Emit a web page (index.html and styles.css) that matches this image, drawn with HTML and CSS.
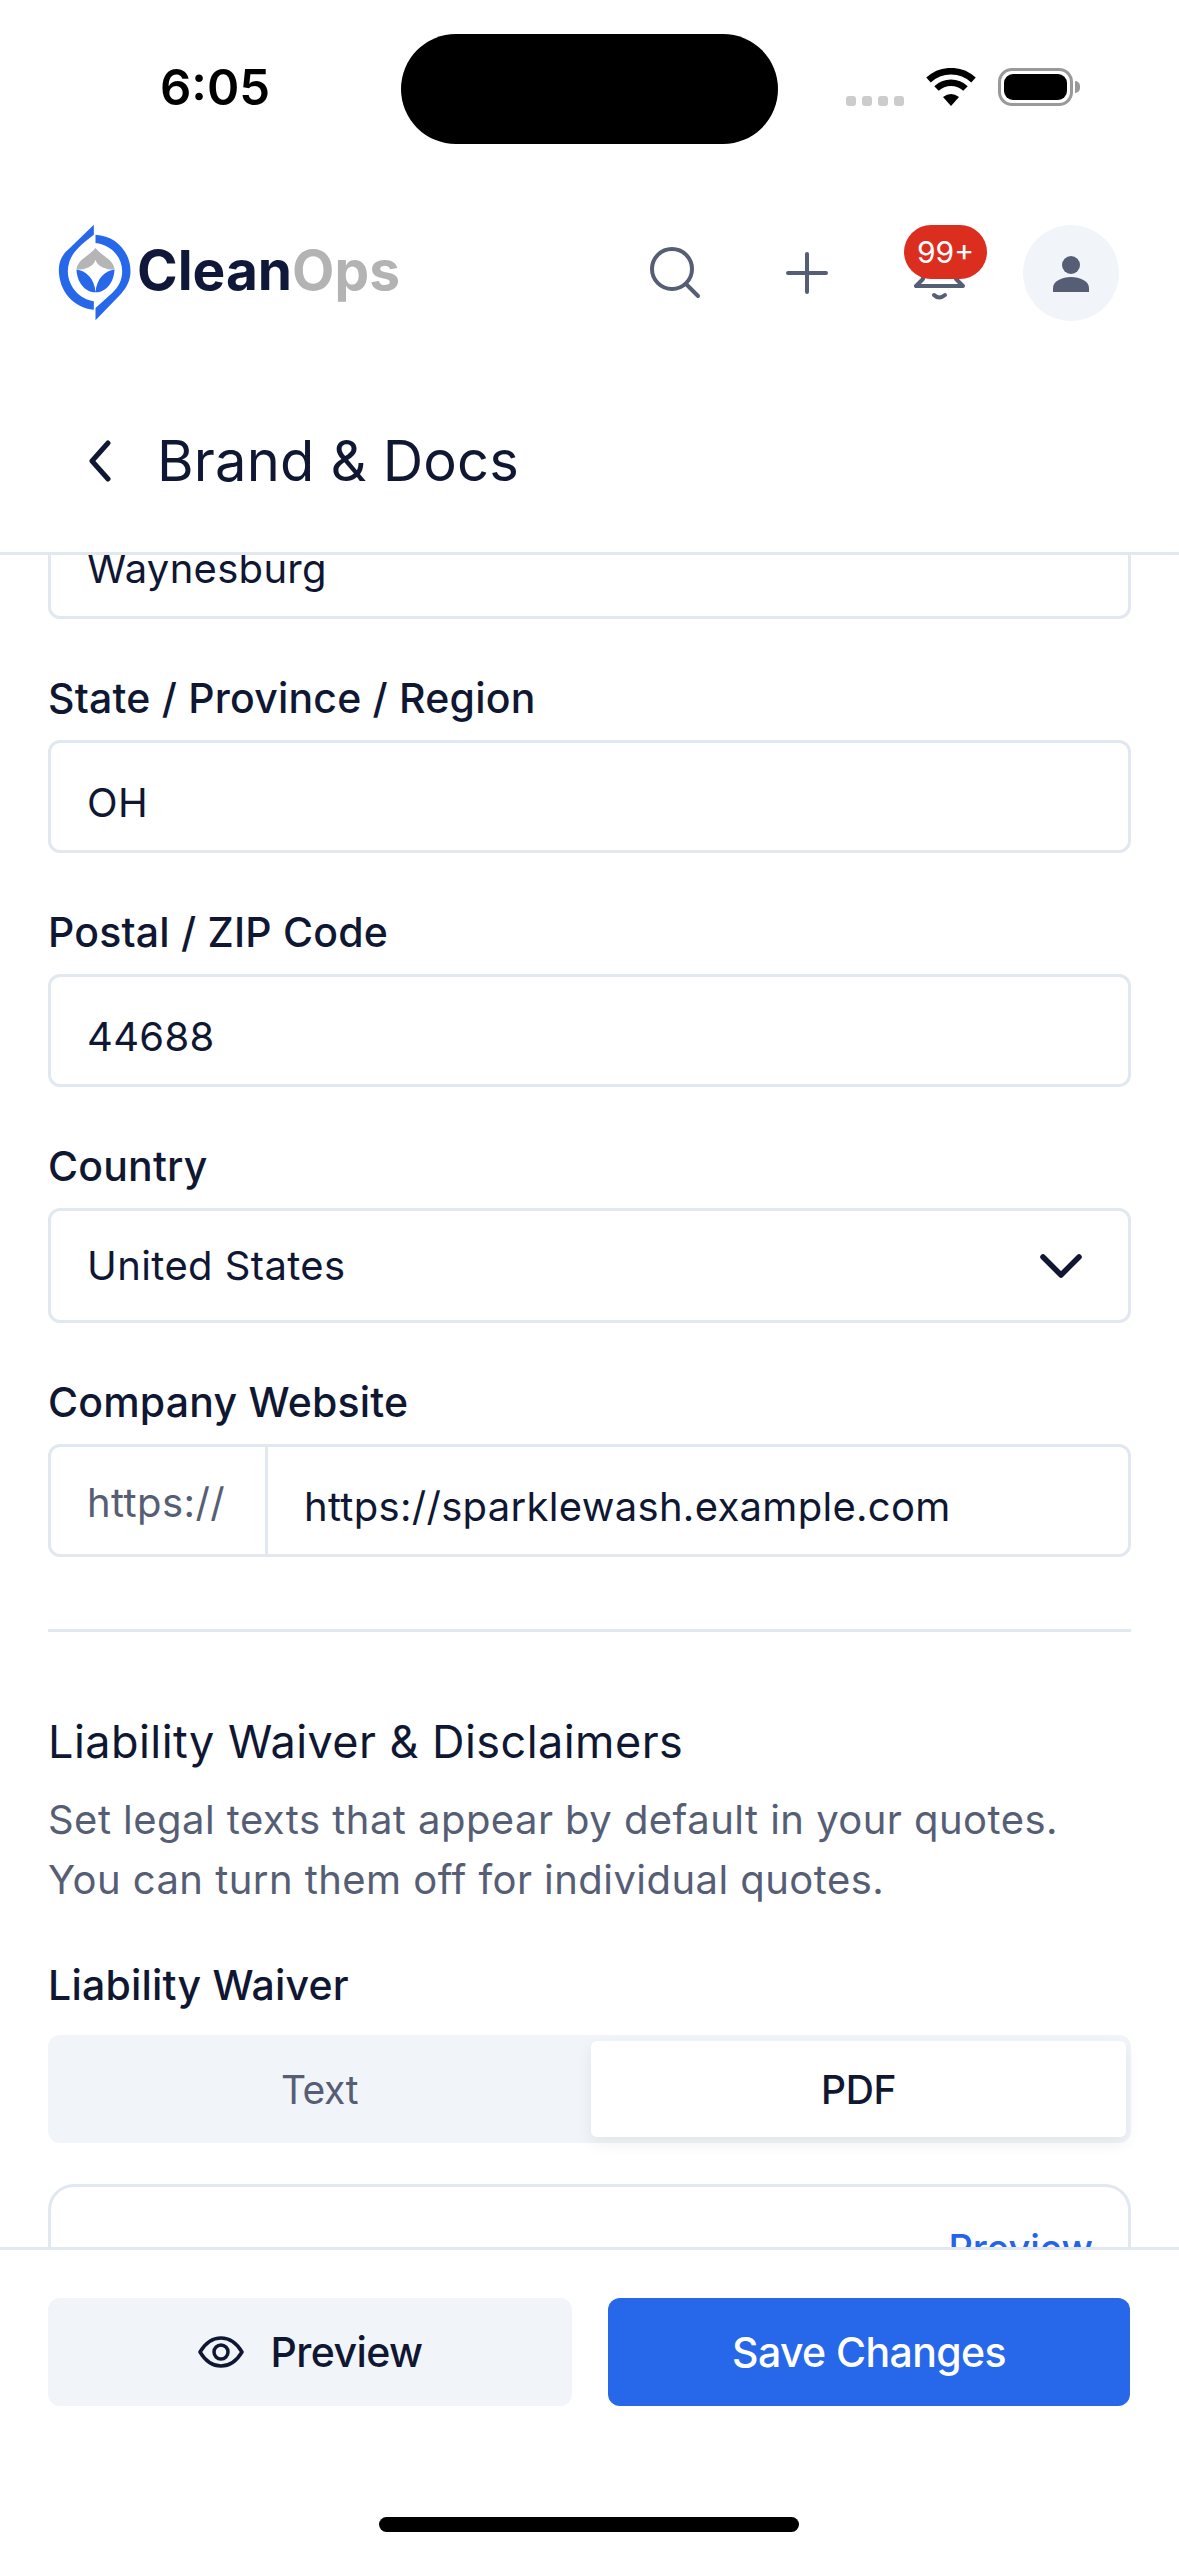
FILE: index.html
```html
<!DOCTYPE html>
<html>
<head>
    <meta charset="UTF-8">
    <meta name="viewport" content="width=device-width, initial-scale=1.0">
    <title>Brand &amp; Docs</title>
    <link rel="stylesheet" href="styles.css">
</head>
<body>
    <!-- Status bar -->
    <div class="status-bar">
        <span class="status-time">6:05</span>
        <div class="island"></div>
        <div class="signal"><i></i><i></i><i></i><i></i></div>
        <svg class="wifi" width="50" height="38" viewBox="0 0 50 38">
            <path d="M2.5 12 A 33 33 0 0 1 47.5 12" fill="none" stroke="#000" stroke-width="6.5"/>
            <path d="M10.5 20.5 A 21 21 0 0 1 39.5 20.5" fill="none" stroke="#000" stroke-width="6.5"/>
            <path d="M25 38 L17 29 Q25 23 33 29 Z" fill="#000"/>
        </svg>
        <div class="battery"><div class="battery-fill"></div></div>
        <div class="battery-nub"></div>
    </div>

    <!-- Top nav -->
    <header class="topnav">
        <div class="logo">
            <svg class="logo-mark" width="77" height="100" viewBox="80 70 230 300">
                <path d="M190 75 V105 C150 135 112 165 112 215 C112 262 150 300 190 305 V330 C130 325 85 275 85 210 C85 180 100 160 115 148 Z" fill="#2767ea"/>
                <path d="M195 105 C255 108 300 155 300 215 C300 240 290 262 272 282 L195 362 V325 L245 280 C265 262 275 240 275 215 C275 170 240 135 195 130 Z" fill="#2767ea"/>
                <path d="M195 145 C175 170 140 180 138 210 H252 C250 180 215 170 195 145 Z" fill="#b5b5b5"/>
                <path d="M138 210 C140 250 165 278 195 278 C225 278 250 250 252 210 Z" fill="#2767ea"/>
                <path d="M195 180 C200 200 225 210 252 210 C225 212 198 235 195 278 C192 235 165 212 138 210 C165 210 190 200 195 180 Z" fill="#fff"/>
            </svg>
            <span class="logo-text">Clean<span class="logo-ops">Ops</span></span>
        </div>
        <div class="nav-actions">
            <div class="nav-btn">
                <svg width="60" height="60" viewBox="0 0 60 60" fill="none" stroke="#565e75" stroke-width="4" stroke-linecap="round">
                    <circle cx="27" cy="26" r="20"/>
                    <path d="M41 41 L53 53"/>
                </svg>
            </div>
            <div class="nav-btn">
                <svg width="44" height="44" viewBox="0 0 44 44" fill="none" stroke="#565e75" stroke-width="4" stroke-linecap="round">
                    <path d="M22 3 V41 M3 22 H41"/>
                </svg>
            </div>
            <div class="nav-btn bell">
                <svg width="60" height="76" viewBox="0 0 60 76" fill="none" stroke="#565e75" stroke-width="4" stroke-linecap="round" stroke-linejoin="round">
                    <path d="M7 59 H54 L47 52 V30 C47 8 14 8 14 30 V52 Z"/>
                    <path d="M25 68 Q30 73 36 68"/>
                </svg>
                <span class="badge">99+</span>
            </div>
            <div class="avatar">
                <svg width="36" height="36" viewBox="0 0 36 36">
                    <circle cx="18" cy="9" r="9" fill="#565e75"/>
                    <path d="M0 36 V32 C0 25 9 21 18 21 C27 21 36 25 36 32 V36 Z" fill="#565e75"/>
                </svg>
            </div>
        </div>
    </header>

    <!-- Page title -->
    <div class="titlebar">
        <svg width="24" height="42" viewBox="0 0 24 42" fill="none" stroke="#0f1733" stroke-width="5" stroke-linecap="round" stroke-linejoin="round">
            <path d="M20 3 L4 21 L20 39"/>
        </svg>
        <h1>Brand &amp; Docs</h1>
    </div>

    <!-- Scrolled form -->
    <main class="content">
        <div class="form-body">
            <div class="field"><span class="field-value">Waynesburg</span></div>

            <div class="form-row">
                <div class="label">State / Province / Region</div>
                <div class="field"><span class="field-value">OH</span></div>
            </div>
            <div class="form-row">
                <div class="label">Postal / ZIP Code</div>
                <div class="field"><span class="field-value">44688</span></div>
            </div>
            <div class="form-row">
                <div class="label">Country</div>
                <div class="field field-select">
                    <span class="select-value">United States</span>
                    <svg width="42" height="26" viewBox="0 0 42 26" fill="none" stroke="#0f1733" stroke-width="5.5" stroke-linecap="round" stroke-linejoin="round">
                        <path d="M3 4 L21 22 L39 4"/>
                    </svg>
                </div>
            </div>
            <div class="form-row">
                <div class="label">Company Website</div>
                <div class="field field-url">
                    <span class="url-prefix">https://</span>
                    <span class="field-value url-value">https://sparklewash.example.com</span>
                </div>
            </div>

            <hr class="divider">

            <h2>Liability Waiver &amp; Disclaimers</h2>
            <p class="desc">Set legal texts that appear by default in your quotes.<br>You can turn them off for individual quotes.</p>

            <div class="label waiver-label">Liability Waiver</div>
            <div class="segmented">
                <div class="seg-item">Text</div>
                <div class="seg-item seg-active">PDF</div>
            </div>

            <div class="pdf-card">
                <a class="pdf-link">Preview</a>
            </div>
        </div>
    </main>

    <!-- Bottom actions -->
    <footer class="actions">
        <div class="action-row">
            <div class="btn btn-light">
                <svg width="46" height="32" viewBox="0 0 46 32" fill="none" stroke="#0f1733" stroke-width="3.5" stroke-linejoin="round">
                    <path d="M2 16 C8 6 15 2 23 2 C31 2 38 6 44 16 C38 26 31 30 23 30 C15 30 8 26 2 16 Z"/>
                    <circle cx="23" cy="16" r="7"/>
                </svg>
                Preview
            </div>
            <div class="btn btn-primary">Save Changes</div>
        </div>
        <div class="home-bar"></div>
    </footer>
</body>
</html>
```

FILE: styles.css
```css
* {
    box-sizing: border-box;
}

html, body {
    height: 100%;
}

body {
    margin: 0;
    width: 1179px;
    height: 2556px;
    display: flex;
    flex-direction: column;
    overflow: hidden;
    background-color: #fff;
    color: #0f1733;
    font-family: Inter, "Noto Sans", sans-serif;
}

/* status bar */
.status-bar {
    display: flex;
    align-items: flex-start;
    height: 225px;
    padding-left: 160px;
    flex-shrink: 0;
}

.status-time {
    width: 109px;
    margin-top: 58px;
    font-size: 49px;
    line-height: 60px;
    font-weight: 600;
    color: #000;
}

.island {
    width: 377px;
    height: 110px;
    margin-top: 34px;
    margin-left: 132px;
    background-color: #000;
    border-radius: 55px;
}

.signal {
    display: flex;
    gap: 6px;
    margin-top: 96px;
    margin-left: 68px;
}

.signal i {
    display: block;
    width: 10px;
    height: 10px;
    border-radius: 3px;
    background-color: #ccc;
}

.wifi {
    margin-top: 68px;
    margin-left: 22px;
}

.battery {
    width: 75px;
    height: 38px;
    margin-top: 68px;
    margin-left: 22px;
    padding: 3px;
    border: 3px solid #999;
    border-radius: 14px;
}

.battery-fill {
    width: 100%;
    height: 100%;
    background-color: #000;
    border-radius: 9px;
}

.battery-nub {
    width: 5px;
    height: 12px;
    margin-top: 81px;
    margin-left: 2px;
    background-color: #999;
    border-radius: 0 5px 5px 0;
}

/* top nav */
.topnav {
    display: flex;
    justify-content: space-between;
    align-items: center;
    height: 96px;
    padding: 0 60px 0 57px;
    flex-shrink: 0;
}

.logo {
    display: flex;
    align-items: center;
    gap: 3px;
}

.logo-text {
    padding-bottom: 6px;
    font-size: 55px;
    font-weight: 700;
    letter-spacing: 0;
    color: #10183a;
}

.logo-ops {
    color: #b3b3b3;
}

.nav-actions {
    display: flex;
    gap: 36px;
}

.nav-btn {
    position: relative;
    display: flex;
    align-items: center;
    justify-content: center;
    width: 96px;
    height: 96px;
}

.bell svg {
    margin-top: -16px;
}

.badge {
    position: absolute;
    top: 0;
    right: 0;
    width: 83px;
    height: 54px;
    border-radius: 27px;
    background-color: #dc2e1f;
    color: #fff;
    font-size: 30px;
    line-height: 54px;
    text-align: center;
}

.avatar {
    display: flex;
    align-items: center;
    justify-content: center;
    width: 96px;
    height: 96px;
    padding-top: 2px;
    border-radius: 50%;
    background-color: #f1f5f9;
}

/* page title */
.titlebar {
    display: flex;
    align-items: center;
    gap: 45px;
    height: 234px;
    padding: 48px 0 0 88px;
    border-bottom: 3px solid #e2e8f0;
    flex-shrink: 0;
}

.titlebar h1 {
    margin: 0;
    font-size: 56px;
    font-weight: 400;
    letter-spacing: 0.2px;
}

/* form */
.content {
    flex: 1;
    min-height: 0;
    overflow: hidden;
    padding: 0 48px;
}

.form-body {
    margin-top: -49px;
}

.form-row {
    margin-top: 54px;
}

.label {
    margin-bottom: 17px;
    font-size: 41px;
    line-height: 50px;
    font-weight: 500;
    letter-spacing: 0.2px;
}

.field {
    display: flex;
    align-items: center;
    height: 113px;
    padding: 0 36px;
    border: 3px solid #e2e8f0;
    border-radius: 12px;
    background-color: #fff;
}

.field-value {
    padding-top: 11px;
    font-size: 40px;
    letter-spacing: 0.3px;
}

.select-value {
    font-size: 40px;
    letter-spacing: 0.4px;
}

.field-select {
    justify-content: space-between;
    height: 115px;
    padding-right: 46px;
}

.field-url {
    padding: 0;
    align-items: stretch;
}

.url-prefix {
    display: flex;
    align-items: center;
    width: 217px;
    padding: 3px 0 0 36px;
    border-right: 3px solid #e2e8f0;
    font-size: 40px;
    letter-spacing: 0.4px;
    color: #565e75;
}

.url-value {
    display: flex;
    align-items: center;
    padding-left: 36px;
}

.divider {
    height: 3px;
    margin: 72px 0 0;
    border: 0;
    background-color: #e2e8f0;
}

h2 {
    margin: 76px 0 0;
    font-size: 45px;
    line-height: 68px;
    font-weight: 400;
    letter-spacing: 0.45px;
}

.desc {
    margin: 14px 0 0;
    font-size: 40px;
    line-height: 60px;
    letter-spacing: 0.45px;
    color: #565e75;
}

.waiver-label {
    margin-top: 50px;
    margin-bottom: 25px;
}

.segmented {
    display: flex;
    height: 108px;
    padding: 6px 5px 6px 0;
    border-radius: 12px;
    background-color: #f1f5f9;
}

.seg-item {
    flex: 1;
    display: flex;
    align-items: center;
    justify-content: center;
    font-size: 39px;
    letter-spacing: -0.4px;
    color: #565e75;
}

.seg-active {
    flex: 0 0 535px;
    border-radius: 6px;
    background-color: #fff;
    box-shadow: 0 6px 16px rgba(15, 23, 42, 0.07);
    color: #0f1733;
    font-weight: 500;
}

.pdf-card {
    height: 200px;
    margin-top: 41px;
    padding: 38px 35px 0 0;
    border: 3px solid #e2e8f0;
    border-radius: 26px;
    text-align: right;
}

.pdf-link {
    font-size: 38px;
    font-weight: 500;
    color: #2563eb;
}

/* bottom bar */
.actions {
    display: flex;
    flex-direction: column;
    height: 309px;
    padding: 48px 49px 0 48px;
    border-top: 3px solid #e2e8f0;
    background-color: #fff;
    flex-shrink: 0;
}

.action-row {
    display: flex;
    gap: 36px;
}

.btn {
    flex: 1;
    display: flex;
    align-items: center;
    justify-content: center;
    gap: 27px;
    height: 108px;
    border-radius: 12px;
    font-size: 41px;
    font-weight: 500;
    letter-spacing: -0.6px;
}

.btn-light {
    flex: 0 0 524px;
    background-color: #f1f5f9;
}

.btn-primary {
    background-color: #2767ea;
    color: #fff;
}

.home-bar {
    align-self: center;
    width: 420px;
    height: 15px;
    margin-top: 111px;
    border-radius: 8px;
    background-color: #000;
}
```
